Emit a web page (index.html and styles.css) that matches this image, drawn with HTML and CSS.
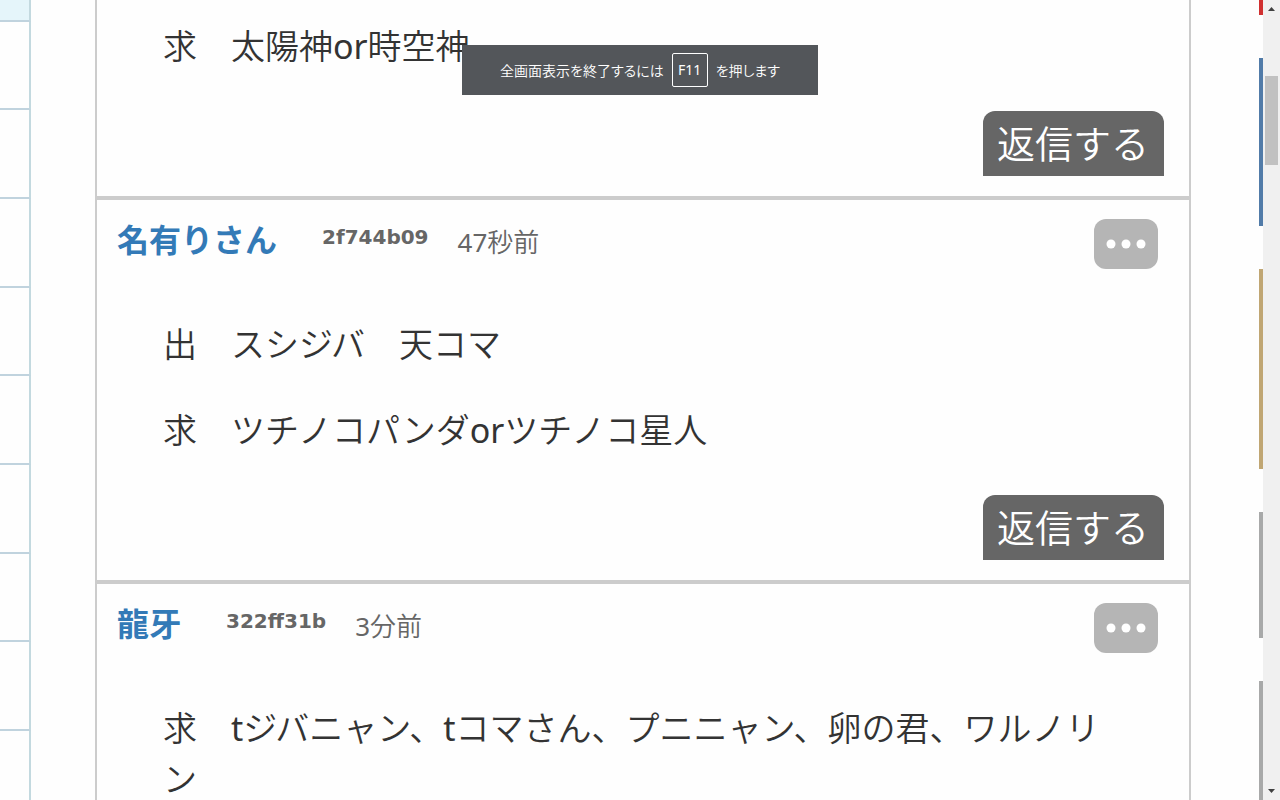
FILE: index.html
```
<!DOCTYPE html>
<html lang="ja">
<head>
  <meta charset="UTF-8">
  <title>交換掲示板</title>
  <link rel="stylesheet" href="styles.css">
</head>
<body>

  <div class="page">
    <table class="side-table">
      <tr class="head"><td></td></tr>
      <tr><td></td></tr>
      <tr><td></td></tr>
      <tr><td></td></tr>
      <tr><td></td></tr>
      <tr><td></td></tr>
      <tr><td></td></tr>
      <tr><td></td></tr>
      <tr><td></td></tr>
      <tr><td></td></tr>
    </table>

    <main class="posts">
      <article class="post post-cut">
        <div class="text">
          <p>求　太陽神or時空神</p>
        </div>
        <button class="reply">返信する</button>
      </article>

      <article class="post">
        <header class="post-head">
          <a class="name" href="#">名有りさん</a>
          <span class="uid">2f744b09</span>
          <span class="time">47秒前</span>
          <button class="more" aria-label="メニュー">
            <svg width="40" height="10" viewBox="0 0 40 10" fill="#fff">
              <circle cx="5" cy="5" r="4.5"/>
              <circle cx="20" cy="5" r="4.5"/>
              <circle cx="35" cy="5" r="4.5"/>
            </svg>
          </button>
        </header>
        <div class="text">
          <p>出　スシジバ　天コマ</p>
          <p>求　ツチノコパンダorツチノコ星人</p>
        </div>
        <button class="reply">返信する</button>
      </article>

      <article class="post">
        <header class="post-head">
          <a class="name" href="#">龍牙</a>
          <span class="uid">322ff31b</span>
          <span class="time">3分前</span>
          <button class="more" aria-label="メニュー">
            <svg width="40" height="10" viewBox="0 0 40 10" fill="#fff">
              <circle cx="5" cy="5" r="4.5"/>
              <circle cx="20" cy="5" r="4.5"/>
              <circle cx="35" cy="5" r="4.5"/>
            </svg>
          </button>
        </header>
        <div class="text">
          <p>求　tジバニャン、tコマさん、プニニャン、卵の君、ワルノリン</p>
        </div>
      </article>
    </main>

    <div class="banners">
      <div class="banner red"></div>
      <div class="banner blue"></div>
      <div class="banner gold"></div>
      <div class="banner gray"></div>
      <div class="banner gray last"></div>
    </div>

    <div class="scrollbar">
      <svg width="7" height="4" viewBox="0 0 7 4" fill="#404040"><path d="M0 4L3.5 0L7 4Z"/></svg>
      <div class="thumb"></div>
      <svg class="down" width="7" height="4" viewBox="0 0 7 4" fill="#404040"><path d="M0 0L3.5 4L7 0Z"/></svg>
    </div>
  </div>

  <div class="fullscreen-note">
    <span>全画面表示を終了するには</span>
    <kbd>F11</kbd>
    <span>を押します</span>
  </div>

</body>
</html>
```
FILE: styles.css
```
* {
  box-sizing: border-box;
}
body {
  margin: 0;
  background: #fefefe;
  color: #333;
  font-family: "Noto Sans", "Noto Sans CJK JP DemiLight", "Noto Sans CJK JP", sans-serif;
}
.page {
  display: flex;
  align-items: flex-start;
  height: 100vh;
  overflow: hidden;
}

/* left table */
.side-table {
  width: 31px;
  flex: none;
  border-collapse: separate;
  border-spacing: 0;
}
.side-table td {
  height: 89px;
  padding: 0;
  border-right: 2px solid #c3d9df;
  border-bottom: 2px solid #c0d3de;
}
.side-table tr:nth-child(3n+2) td {
  height: 88px;
}
.side-table .head td {
  height: 22px;
  background: #e5f5fa;
}

/* posts */
.posts {
  flex: 1;
  margin: 0 68px 0 64px;
}
.post {
  display: flex;
  flex-direction: column;
  border: 2px solid #ccc;
  padding: 19px 25px 20px 20px;
}
.post-cut {
  border-top: 0;
  padding-top: 21px;
}
.post-head {
  display: flex;
  align-items: flex-start;
  height: 50px;
  margin-bottom: 50px;
}
.name {
  color: #337ab7;
  font-family: "Noto Sans CJK JP", sans-serif;
  font-size: 32px;
  font-weight: bold;
  line-height: 38px;
  text-decoration: none;
}
.uid {
  margin-left: 45px;
  color: #666;
  font-family: "DejaVu Sans", sans-serif;
  font-size: 20px;
  font-weight: bold;
  line-height: 36px;
}
.time {
  margin-left: 29px;
  color: #666;
  font-size: 26px;
  line-height: 46px;
}
.more {
  display: flex;
  align-items: center;
  justify-content: center;
  width: 64px;
  height: 50px;
  margin: 0 6px 0 auto;
  padding: 0;
  border: 0;
  border-radius: 12px;
  background: #b5b5b5;
}
.text {
  margin: 0 40px 39px 46px;
  font-size: 34px;
  line-height: 51px;
}
.text p {
  margin: 0;
}
.text p + p {
  margin-top: 35px;
}
.reply {
  align-self: flex-end;
  height: 65px;
  padding: 0 15px 0 14px;
  border: 0;
  border-radius: 12px 12px 0 0;
  background: #666;
  color: #fff;
  font-family: inherit;
  font-size: 38px;
  line-height: 65px;
}

/* right edge */
.banners {
  flex: none;
  width: 4px;
}
.banner {
  margin-bottom: 43px;
}
.red {
  height: 15px;
  background: #d03030;
}
.blue {
  height: 168px;
  background: #517ba8;
}
.gold {
  height: 200px;
  background: #c0a673;
}
.gray {
  height: 126px;
  background: #a8a9a9;
}
.last {
  height: 200px;
}
.scrollbar {
  display: flex;
  flex-direction: column;
  align-items: center;
  flex: none;
  width: 17px;
  height: 100%;
  padding: 7px 0;
  background: #f0f0f0;
}
.thumb {
  width: 13px;
  height: 89px;
  margin-top: 65px;
  background: #c1c1c1;
}
.down {
  margin-top: auto;
}

/* fullscreen message */
.fullscreen-note {
  position: absolute;
  top: 45px;
  left: 50%;
  transform: translateX(-50%);
  display: flex;
  align-items: center;
  justify-content: center;
  gap: 8px;
  width: 356px;
  height: 50px;
  background: #53565a;
  color: #fff;
  font-size: 14px;
  font-feature-settings: "palt";
  white-space: nowrap;
}
.fullscreen-note kbd {
  width: 36px;
  border: 1px solid #fff;
  border-radius: 2px;
  font-family: inherit;
  line-height: 32px;
  text-align: center;
}
```
